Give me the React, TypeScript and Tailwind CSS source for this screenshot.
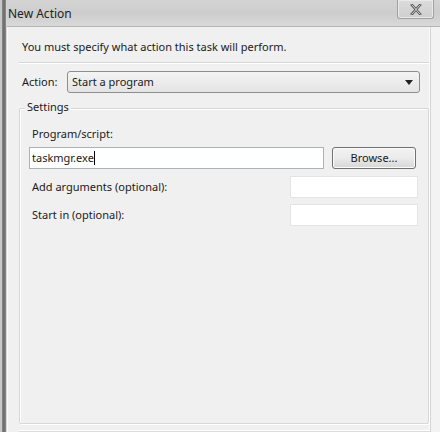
import React from "react";

const font = { fontFamily: '"Noto Sans", "Open Sans", sans-serif' };

export default function App() {
  return (
    <div
      className="w-[440px] h-[432px] flex overflow-hidden bg-[#f0f0f0] text-[11px] text-[#1a1a1a]"
      style={font}
    >
      {/* left frame strip */}
      <div className="w-[7px] h-full flex shrink-0">
        <div className="w-[2px] bg-[#c8c8c8]" />
        <div className="w-[4px] bg-gradient-to-r from-[#8a8a8a] via-[#6a6a6a] to-[#8e8e8e]" />
        <div className="w-[1px] bg-[#d6d6d6]" />
      </div>
      <div className="w-[433px] flex flex-col shrink-0">
        {/* title bar */}
        <div className="h-[27px] shrink-0 flex items-start bg-gradient-to-b from-[#d4d4d4] via-[#cdcdcd] to-[#d9d9d9] relative border-b border-[#b4b4b4]">
          <span className="pl-[1px] pt-[6px] text-[12px] leading-[15px] text-[#222]">New Action</span>
          <div className="absolute right-[6px] top-0 w-[37px] h-[19px] border border-t-0 border-[#a0a0a0] rounded-b-[3px] bg-gradient-to-b from-[#dcdcdc] to-[#cfcfcf] flex items-center justify-center shadow-[inset_0_0_0_1px_#eaeaea]">
            <svg width="12" height="11" viewBox="0 0 12 11">
              <path d="M2 1 L10 10 M10 1 L2 10" stroke="#555" strokeWidth="2.6" strokeLinecap="square" />
              <path d="M2 1 L10 10 M10 1 L2 10" stroke="#e8e8e8" strokeWidth="0.9" strokeLinecap="square" />
            </svg>
          </div>
        </div>
        {/* content */}
        <div className="flex-1 flex">
          <div className="w-[423px] shrink-0 flex flex-col items-start bg-[#f0f0f0] border-l border-r border-[#fafafa] pl-[14px]">
            <div className="pt-[12px] h-[35px] leading-[16px]">
              You must specify what action this task will perform.
            </div>
            <div className="w-[410px] h-[1px] bg-[#d6d6d6] border-b border-white -ml-[3px] box-content" />
            <div className="w-[398px] flex items-center mt-[7px] h-[22px]">
              <span className="w-[45px]">Action:</span>
              <div className="flex-1 h-[22px] flex items-center justify-between border border-[#8c8e90] rounded-[3px] bg-gradient-to-b from-[#f4f4f4] to-[#e4e4e4] pl-[4px] pr-[6px]">
                <span>Start a program</span>
                <svg width="8" height="5" viewBox="0 0 8 5">
                  <path d="M0 0 H8 L4 5 Z" fill="#222" />
                </svg>
              </div>
            </div>
            {/* group box */}
            <div className="relative w-[410px] mt-[15px] flex-1 mb-[6px] -ml-[3px]">
              <div className="absolute inset-0 border border-[#d8d8d8] rounded-[2px] shadow-[inset_1px_1px_0_#ffffff,1px_1px_0_#ffffff]" />
              <span className="absolute left-[6px] -top-[9px] px-[2px] bg-[#f0f0f0] leading-[16px]">Settings</span>
              <div className="relative flex flex-col pl-[13px] pr-[11px] pt-[18px]">
                <div className="leading-[16px] h-[21px]">Program/script:</div>
                <div className="flex items-center">
                  <div className="w-[295px] h-[22px] ml-[-3px] bg-white border border-[#abb2ba] flex items-center pl-[2px]">
                    <span>taskmgr.exe</span>
                    <span className="w-[1px] h-[14px] bg-black" />
                  </div>
                  <div className="ml-[8px] w-[84px] h-[22px] border border-[#707070] rounded-[3px] bg-gradient-to-b from-[#f2f2f2] via-[#ebebeb] to-[#d6d6d6] flex items-center justify-center shadow-[inset_0_0_0_1px_#fbfbfb]">
                    Browse...
                  </div>
                </div>
                <div className="flex items-center justify-between mt-[7px] h-[22px]">
                  <span>Add arguments (optional):</span>
                  <div className="w-[128px] h-[22px] bg-white border border-[#e2e4e6]" />
                </div>
                <div className="flex items-center justify-between mt-[6px] h-[22px]">
                  <span>Start in (optional):</span>
                  <div className="w-[128px] h-[22px] bg-white border border-[#e2e4e6]" />
                </div>
              </div>
            </div>
            <div className="w-[412px] h-[1px] bg-[#dcdcdc] border-t border-white box-content -ml-[3px]" />
          </div>
          <div className="flex-1 border-l border-[#d4d4d4] bg-[#f3f3f3]" />
        </div>
      </div>
    </div>
  );
}
